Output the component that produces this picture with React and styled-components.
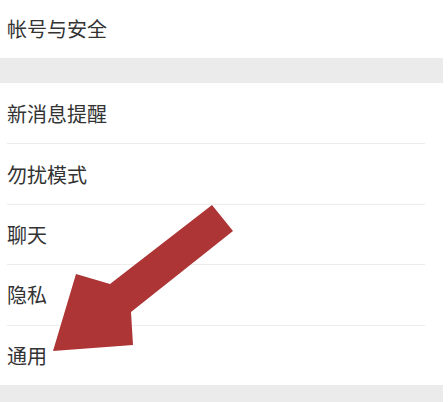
import styled, { createGlobalStyle } from "styled-components";

const GlobalStyle = createGlobalStyle`
  body {
    margin: 0;
    background: #fff;
    font-family: "Noto Sans CJK SC", "Noto Sans", sans-serif;
  }
`;

const items = ["新消息提醒", "勿扰模式", "聊天", "隐私", "通用"];

export default function App() {
  return (
    <Page>
      <GlobalStyle />
      <Group>
        <Row $top>帐号与安全</Row>
      </Group>
      <Spacer />
      <Group>
        {items.map((label, i) => (
          <Row key={label} $divider={i > 0}>
            {label}
          </Row>
        ))}
      </Group>
      <Spacer $bottom />
      <Arrow viewBox="0 0 443 402" width="443" height="402">
        <polygon
          points="212,205 233,231 131,312 133,345 53,351 76,274 110,284"
          fill="#ad3535"
        />
      </Arrow>
    </Page>
  );
}

const Page = styled.div`
  position: relative;
  width: 443px;
  height: 402px;
  overflow: hidden;
  display: flex;
  flex-direction: column;
  background: #fff;
`;

const Group = styled.div`
  display: flex;
  flex-direction: column;
  background: #fff;
`;

const Row = styled.div`
  box-sizing: border-box;
  height: ${(p) => (p.$top ? "58px" : "60.4px")};
  margin: 0 18px 0 7px;
  padding-bottom: ${(p) => (p.$top ? "2px" : "0")};
  display: flex;
  align-items: center;
  font-size: 20px;
  color: #333;
  border-top: ${(p) => (p.$divider ? "1px solid #ededed" : "none")};
`;

const Spacer = styled.div`
  height: ${(p) => (p.$bottom ? "17px" : "25px")};
  flex-shrink: 0;
  background: #ebebeb;
`;

const Arrow = styled.svg`
  position: absolute;
  left: 0;
  top: 0;
  pointer-events: none;
`;
